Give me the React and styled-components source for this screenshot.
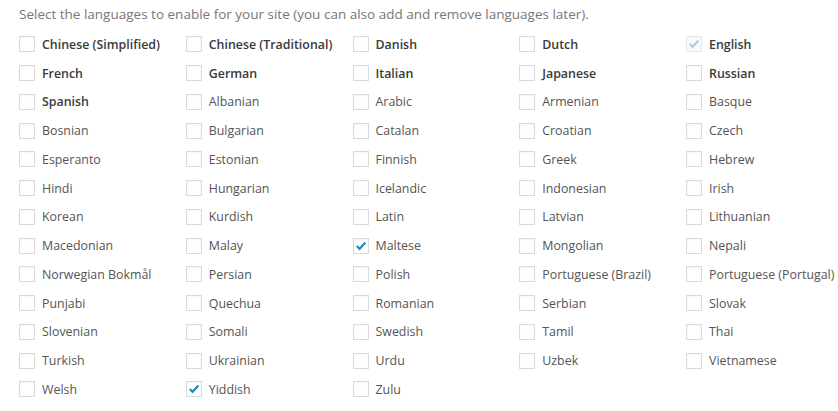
import React from "react"
import styled, { createGlobalStyle } from "styled-components"

const GlobalStyle = createGlobalStyle`
  body {
    margin: 0;
    background: #fff;
    font-family: "Open Sans", "Liberation Sans", sans-serif;
  }
`

const StyledPage = styled.div`
  padding: 5px 0 0 19px;
`

const StyledIntro = styled.p`
  margin: 0;
  font-size: 13.5px;
  line-height: 18px;
  color: #777;
`

const StyledGrid = styled.div`
  display: grid;
  grid-template-columns: repeat(5, 166.75px);
  grid-auto-rows: 28.75px;
  margin-top: 7px;
`

const StyledOption = styled.label`
  display: flex;
  align-items: center;
  gap: 7px;
  font-size: 12.4px;
  color: ${(p) => (p.$featured ? "#3a3a3a" : "#555")};
  font-weight: ${(p) => (p.$featured ? 600 : 400)};
  white-space: nowrap;
`

const StyledBox = styled.span`
  display: flex;
  align-items: center;
  justify-content: center;
  width: 14px;
  height: 14px;
  flex: none;
  border: 1px solid #dadada;
  background: ${(p) => (p.$disabled ? "#f7f7f7" : "#fff")};
  box-shadow: inset 0 1px 2px rgba(0, 0, 0, 0.04);
  opacity: ${(p) => (p.$disabled ? 0.6 : 1)};
`

const languages = [
  ["Chinese (Simplified)", true],
  ["Chinese (Traditional)", true],
  ["Danish", true],
  ["Dutch", true],
  ["English", true, "disabled"],
  ["French", true],
  ["German", true],
  ["Italian", true],
  ["Japanese", true],
  ["Russian", true],
  ["Spanish", true],
  "Albanian", "Arabic", "Armenian", "Basque",
  "Bosnian", "Bulgarian", "Catalan", "Croatian", "Czech",
  "Esperanto", "Estonian", "Finnish", "Greek", "Hebrew",
  "Hindi", "Hungarian", "Icelandic", "Indonesian", "Irish",
  "Korean", "Kurdish", "Latin", "Latvian", "Lithuanian",
  "Macedonian", "Malay", ["Maltese", false, "checked"], "Mongolian", "Nepali",
  "Norwegian Bokmål", "Persian", "Polish", "Portuguese (Brazil)", "Portuguese (Portugal)",
  "Punjabi", "Quechua", "Romanian", "Serbian", "Slovak",
  "Slovenian", "Somali", "Swedish", "Tamil", "Thai",
  "Turkish", "Ukrainian", "Urdu", "Uzbek", "Vietnamese",
  "Welsh", ["Yiddish", false, "checked"], "Zulu",
]

function Check({ color }) {
  return (
    <svg width="12" height="12" viewBox="0 0 12 12">
      <path d="M1.8 6 L4.6 8.8 L10.4 2.6" fill="none" stroke={color} strokeWidth="2.2" />
    </svg>
  )
}

function Option({ lang }) {
  const [name, featured, state] = Array.isArray(lang) ? lang : [lang, false]
  return (
    <StyledOption $featured={featured}>
      <StyledBox $disabled={state === "disabled"}>
        {state && <Check color={state === "disabled" ? "#6aaee0" : "#1e8cbe"} />}
      </StyledBox>
      {name}
    </StyledOption>
  )
}

export default function App() {
  return (
    <StyledPage>
      <GlobalStyle />
      <StyledIntro>
        Select the languages to enable for your site (you can also add and remove languages later).
      </StyledIntro>
      <StyledGrid>
        {languages.map((lang) => (
          <Option key={Array.isArray(lang) ? lang[0] : lang} lang={lang} />
        ))}
      </StyledGrid>
    </StyledPage>
  )
}
